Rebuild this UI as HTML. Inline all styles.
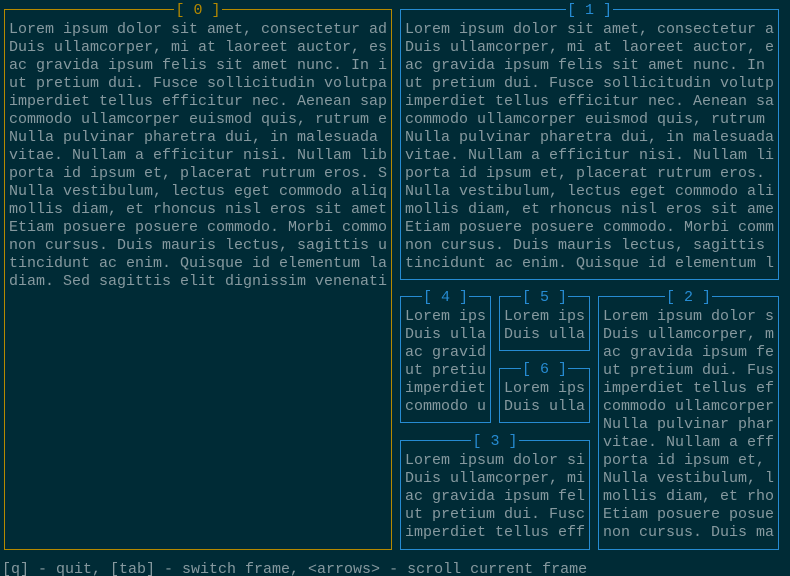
<!DOCTYPE html>
<html><head><meta charset="utf-8"><style>
html,body{margin:0;padding:0;background:#002b36;width:790px;height:576px;overflow:hidden}
body{position:relative;font-family:"Liberation Mono","DejaVu Sans Mono",monospace;font-size:15px;line-height:18px;color:#86999f}
.f{position:absolute;box-sizing:border-box;border:1px solid #268bd2}
.f.o{border-color:#b58900}
.t{position:absolute;top:-8px;left:0;right:0;text-align:center;height:18px;line-height:18px}
.t span{background:#002b36;color:#268bd2;white-space:pre;padding:0 1px}
.o .t span{color:#b58900}
.c{position:absolute;white-space:pre;overflow:hidden;margin:0;padding-top:3px}
.s{position:absolute;left:2px;top:561px;white-space:pre}
</style></head><body>

<div class="f o" style="left:4px;top:9px;width:388px;height:541px"><div class="t"><span>[ 0 ]</span></div></div>
<pre class="c" style="left:9px;top:18px;width:378px;height:522px;font:inherit">Lorem ipsum dolor sit amet, consectetur adipiscing
Duis ullamcorper, mi at laoreet auctor, est
ac gravida ipsum felis sit amet nunc. In ip
ut pretium dui. Fusce sollicitudin volutpat
imperdiet tellus efficitur nec. Aenean sapi
commodo ullamcorper euismod quis, rutrum eg
Nulla pulvinar pharetra dui, in malesuada
vitae. Nullam a efficitur nisi. Nullam libe
porta id ipsum et, placerat rutrum eros. Se
Nulla vestibulum, lectus eget commodo aliqu
mollis diam, et rhoncus nisl eros sit amet
Etiam posuere posuere commodo. Morbi commod
non cursus. Duis mauris lectus, sagittis ut
tincidunt ac enim. Quisque id elementum lac
diam. Sed sagittis elit dignissim venenatis</pre>

<div class="f" style="left:400px;top:9px;width:379px;height:271px"><div class="t"><span>[ 1 ]</span></div></div>
<pre class="c" style="left:405px;top:18px;width:369px;height:252px;font:inherit">Lorem ipsum dolor sit amet, consectetur adipiscing
Duis ullamcorper, mi at laoreet auctor, est
ac gravida ipsum felis sit amet nunc. In ip
ut pretium dui. Fusce sollicitudin volutpat
imperdiet tellus efficitur nec. Aenean sapi
commodo ullamcorper euismod quis, rutrum eg
Nulla pulvinar pharetra dui, in malesuada
vitae. Nullam a efficitur nisi. Nullam libe
porta id ipsum et, placerat rutrum eros. Se
Nulla vestibulum, lectus eget commodo aliqu
mollis diam, et rhoncus nisl eros sit amet
Etiam posuere posuere commodo. Morbi commod
non cursus. Duis mauris lectus, sagittis ut
tincidunt ac enim. Quisque id elementum lac</pre>

<div class="f" style="left:400px;top:296px;width:91px;height:127px"><div class="t"><span>[ 4 ]</span></div></div>
<pre class="c" style="left:405px;top:305px;width:81px;height:108px;font:inherit">Lorem ipsum
Duis ullamc
ac gravida
ut pretium
imperdiet t
commodo ull</pre>

<div class="f" style="left:499px;top:296px;width:91px;height:55px"><div class="t"><span>[ 5 ]</span></div></div>
<pre class="c" style="left:504px;top:305px;width:81px;height:36px;font:inherit">Lorem ipsum
Duis ullamc</pre>

<div class="f" style="left:499px;top:368px;width:91px;height:55px"><div class="t"><span>[ 6 ]</span></div></div>
<pre class="c" style="left:504px;top:377px;width:81px;height:36px;font:inherit">Lorem ipsum
Duis ullamc</pre>

<div class="f" style="left:400px;top:440px;width:190px;height:110px"><div class="t"><span>[ 3 ]</span></div></div>
<pre class="c" style="left:405px;top:449px;width:180px;height:90px;font:inherit">Lorem ipsum dolor sit
Duis ullamcorper, mi a
ac gravida ipsum felis
ut pretium dui. Fusce
imperdiet tellus effic</pre>

<div class="f" style="left:598px;top:296px;width:181px;height:254px"><div class="t"><span>[ 2 ]</span></div></div>
<pre class="c" style="left:603px;top:305px;width:171px;height:234px;font:inherit">Lorem ipsum dolor sit
Duis ullamcorper, mi a
ac gravida ipsum felis
ut pretium dui. Fusce
imperdiet tellus effic
commodo ullamcorper eu
Nulla pulvinar pharetr
vitae. Nullam a effici
porta id ipsum et, pla
Nulla vestibulum, lect
mollis diam, et rhoncu
Etiam posuere posuere
non cursus. Duis mauri</pre>

<div class="s">[q] - quit, [tab] - switch frame, &lt;arrows&gt; - scroll current frame</div>
</body></html>
